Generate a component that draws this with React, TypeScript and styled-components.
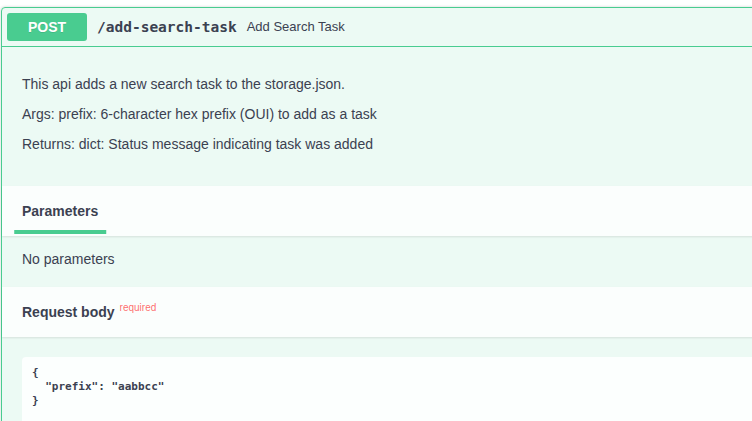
import React from "react";
import styled, { createGlobalStyle } from "styled-components";

const GlobalStyle = createGlobalStyle`
  html, body { margin: 0; padding: 0; background: #ffffff; overflow: hidden; }
  body { font-family: "Liberation Sans", Arial, sans-serif; color: #3b4151; }
`;

const Page = styled.div`
  padding: 7px 0 0 1px;
  width: 820px;
`;

const OpBlock = styled.div`
  border: 1px solid #49cc90;
  border-radius: 4px;
  background: rgba(73, 204, 144, 0.1);
  box-shadow: 0 0 3px rgba(0, 0, 0, 0.19);
`;

const Summary = styled.div`
  display: flex;
  align-items: center;
  padding: 5px;
  border-bottom: 1px solid #49cc90;
`;

const Method = styled.span`
  min-width: 80px;
  height: 28px;
  display: flex;
  align-items: center;
  justify-content: center;
  border-radius: 3px;
  background: #49cc90;
  color: #ffffff;
  font-size: 14px;
  font-weight: 700;
  text-shadow: 0 1px 0 rgba(0, 0, 0, 0.1);
`;

const Path = styled.span`
  padding: 0 10px;
  font-family: "DejaVu Sans Mono", monospace;
  font-size: 14.5px;
  font-weight: 700;
  color: #3b4151;
`;

const SummaryDesc = styled.span`
  font-size: 13px;
  color: #3b4151;
  position: relative;
  top: -1px;
`;

const DescWrapper = styled.div<{ $compact?: boolean }>`
  padding: 15px 20px;
  margin-bottom: 5px;
  font-size: 14px;
  p {
    margin: ${(p) => (p.$compact ? "0" : "14px 0")};
    line-height: 16px;
    color: #3b4151;
  }
`;

const SectionHeader = styled.div`
  display: flex;
  align-items: center;
  min-height: 50px;
  padding: 0 20px;
  box-sizing: border-box;
  background: rgba(255, 255, 255, 0.8);
  box-shadow: 0 1px 2px rgba(0, 0, 0, 0.1);
`;

const TabTitle = styled.h4<{ $shift?: number }>`
  margin: 0;
  font-size: 14px;
  font-weight: 700;
  line-height: 16px;
  color: #3b4151;
  position: relative;
  top: ${(p) => p.$shift ?? 0}px;
`;

const ActiveTab = styled.span`
  position: relative;
  &::after {
    content: "";
    position: absolute;
    bottom: -15px;
    left: 50%;
    width: 120%;
    height: 4px;
    transform: translateX(-50%);
    background: #49cc90;
  }
`;

const Required = styled.span`
  position: relative;
  top: -6px;
  margin-left: 5px;
  font-size: 10px;
  font-weight: 400;
  color: rgba(255, 0, 0, 0.6);
`;

const BodyWrapper = styled.div`
  padding: 20px 20px 20px;
`;

const CodeBlock = styled.pre`
  margin: 0;
  padding: 9px 10px 20px;
  border-radius: 4px;
  background: rgba(255, 255, 255, 0.85);
  font-family: "DejaVu Sans Mono", monospace;
  font-size: 11px;
  font-weight: 600;
  line-height: 14px;
  color: #3b4151;
  min-height: 80px;
`;

export default function App() {
  return (
    <>
      <GlobalStyle />
      <Page>
        <OpBlock>
          <Summary>
            <Method>POST</Method>
            <Path>/add-search-task</Path>
            <SummaryDesc>Add Search Task</SummaryDesc>
          </Summary>
          <DescWrapper>
            <p>This api adds a new search task to the storage.json.</p>
            <p>Args: prefix: 6-character hex prefix (OUI) to add as a task</p>
            <p>Returns: dict: Status message indicating task was added</p>
          </DescWrapper>
          <SectionHeader>
            <TabTitle>
              <ActiveTab>Parameters</ActiveTab>
            </TabTitle>
          </SectionHeader>
          <DescWrapper $compact>
            <p>No parameters</p>
          </DescWrapper>
          <SectionHeader>
            <TabTitle $shift={1}>
              Request body<Required>required</Required>
            </TabTitle>
          </SectionHeader>
          <BodyWrapper>
            <CodeBlock>{`{\n  "prefix": "aabbcc"\n}`}</CodeBlock>
          </BodyWrapper>
        </OpBlock>
      </Page>
    </>
  );
}
